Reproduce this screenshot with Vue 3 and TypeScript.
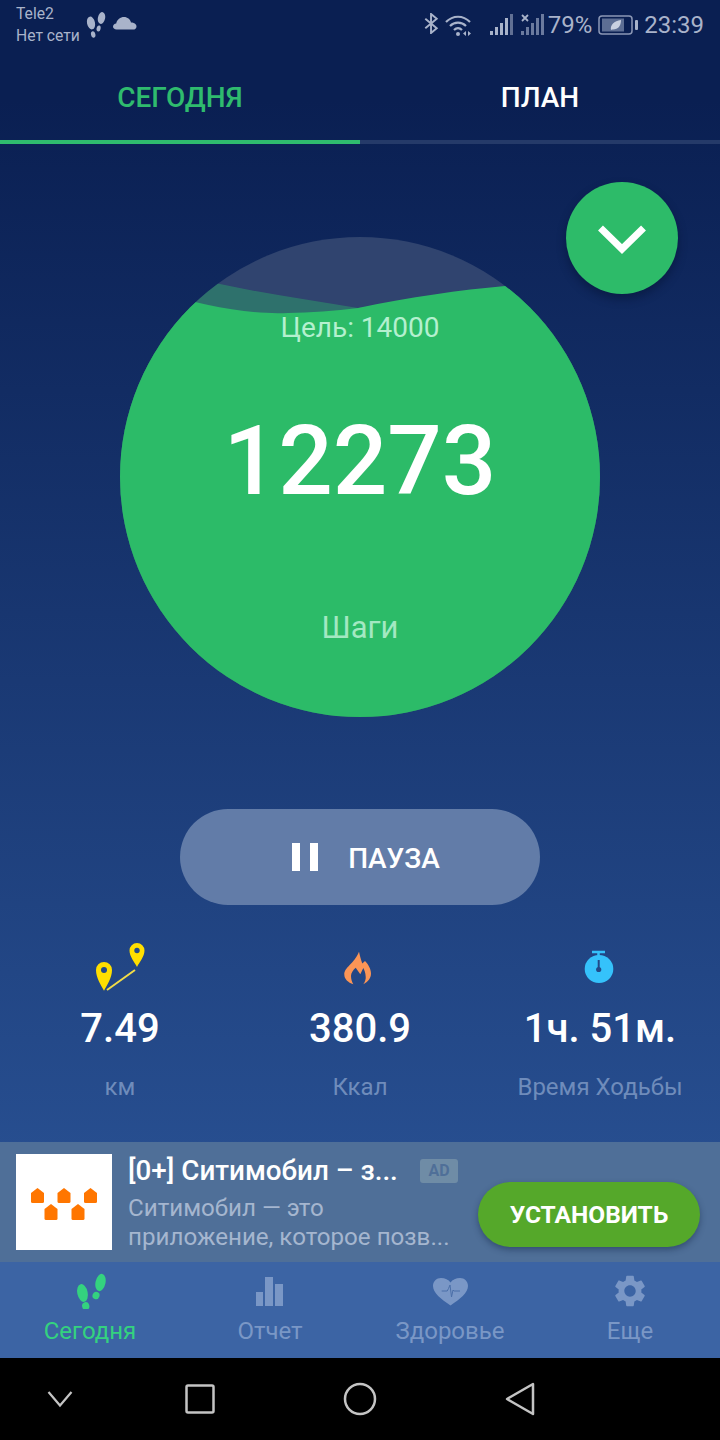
<template>
  <div class="page">
    <!-- status bar -->
    <header class="status">
      <div class="carrier">
        <span>Tele2</span>
        <span>Нет сети</span>
      </div>
      <svg class="st-steps" width="22" height="27" viewBox="0 0 22 27" fill="#a9b3ca">
        <ellipse cx="6" cy="11" rx="4" ry="6.5" transform="rotate(-12 6 11)" />
        <ellipse cx="8.2" cy="22.5" rx="2.2" ry="3.2" transform="rotate(-12 8.2 22.5)" />
        <ellipse cx="16.5" cy="6" rx="3.6" ry="6" transform="rotate(12 16.5 6)" />
        <ellipse cx="13.6" cy="16.5" rx="2" ry="3" transform="rotate(12 13.6 16.5)" />
      </svg>
      <svg class="st-cloud" width="24" height="16" viewBox="0 0 24 16" fill="#a9b3ca">
        <path d="M3.5 15.5C1.4 15.5 0 14.2 0 12.6c0-1.7 1.4-3 3.2-3.1C4 5.600 7.400 3 11 3c3.500 0 6.200 2.300 7 5.400 3 .1 5.500 1.500 5.500 4 0 1.900-1.500 3.100-3.500 3.100z" />
      </svg>
      <div class="status-right">
        <svg class="st-bt" width="15" height="21" viewBox="0 0 15 22" fill="none" stroke="#a9b3ca" stroke-width="2">
          <path d="M1 6l12 10-6 5V1l6 5L1 16" />
        </svg>
        <svg class="st-wifi" width="28" height="23" viewBox="0 0 28 23" fill="none" stroke="#a9b3ca" stroke-width="2.200">
          <path d="M1 8c7-7 17-7 24 0M5 12c4.500-4.500 11.500-4.500 16 0M9 16c2.500-2.500 5.500-2.500 8 0" />
          <circle cx="13" cy="20" r="2" fill="#a9b3ca" stroke="none" />
          <path d="M21 17l-3 2.500 3 2.500zM23 17l3 2.500-3 2.500z" fill="#a9b3ca" stroke="none" />
        </svg>
        <svg class="st-sig" width="24" height="22" viewBox="0 0 24 22" fill="#a9b3ca">
          <rect x="0" y="17" width="3" height="4" />
          <rect x="5" y="13" width="3" height="8" />
          <rect x="10" y="9" width="3" height="12" />
          <rect x="15" y="4" width="3" height="17" />
          <rect x="20" y="0" width="3" height="21" opacity=".55" />
        </svg>
        <svg class="st-sig2" width="24" height="22" viewBox="0 0 24 22" fill="#6b7a9e">
          <rect x="0" y="17" width="3" height="4" />
          <rect x="5" y="13" width="3" height="8" />
          <rect x="10" y="9" width="3" height="12" />
          <rect x="15" y="4" width="3" height="17" />
          <rect x="20" y="0" width="3" height="21" />
          <path d="M1 1l6 6M7 1L1 7" stroke="#a9b3ca" stroke-width="1.800" />
        </svg>
        <span class="pct">79%</span>
        <svg class="st-batt" width="41" height="20" viewBox="0 0 41 20">
          <rect x="1" y="1" width="33" height="18" rx="3" fill="none" stroke="#8c98b6" stroke-width="1.500" />
          <rect x="4" y="3.500" width="22" height="13" fill="#5d6e94" />
          <rect x="37" y="5" width="3" height="10" rx="1" fill="#a9b3ca" />
          <path d="M13 15c-1-5 3-9 10-10 0 6-3 10-9 9.500z" fill="#c9d0e0" />
        </svg>
        <span class="clock">23:39</span>
      </div>
    </header>

    <!-- tabs -->
    <nav class="tabs">
      <div class="tab active">СЕГОДНЯ</div>
      <div class="tab">ПЛАН</div>
    </nav>

    <main class="main">
      <button class="fab">
        <svg width="48" height="32" viewBox="0 0 48 32" fill="none" stroke="#fff" stroke-width="7">
          <path d="M2.500 6L24 27L45.500 6" />
        </svg>
      </button>

      <div class="ball">
        <svg class="waves" width="480" height="480" viewBox="0 0 480 480">
          <path d="M40 32C100 50 170 60 238 71L480 40V480H0V32z" fill="#2cbb68" opacity=".38" />
          <path d="M40 55C80 68 130 78 168 76C190 75.500 215 74 238 71C290 60 340 53 385 49C420 46 450 44 480 42V480H0V55z" fill="#2cbb68" />
        </svg>
        <div class="goal">Цель: 14000</div>
        <div class="count">12273</div>
        <div class="unit">Шаги</div>
      </div>

      <button class="pause">
        <span class="bars"><i></i><i></i></span>
        <span class="pause-text">ПАУЗА</span>
      </button>

      <section class="stats">
        <div class="stat">
          <svg class="stat-icon" width="52" height="52" viewBox="0 0 52 52">
            <path d="M10 50.700C7 45 2 38 2 30a8 8 0 0 1 16 0C18 38 13 45 10 50.700z" fill="#ffdf00" />
            <circle cx="10" cy="30" r="3" fill="#234a88" />
            <path d="M43 27C40.500 22 35.500 16.500 35.500 10.500a7.500 7.500 0 0 1 15 0C50.500 16.500 45.500 22 43 27z" fill="#ffdf00" />
            <circle cx="43" cy="10.500" r="2.700" fill="#234a88" />
            <path d="M13 50L41 30" stroke="#f2dc47" stroke-width="2" />
          </svg>
          <div class="value">7.49</div>
          <div class="label">км</div>
        </div>
        <div class="stat">
          <svg class="stat-icon" width="52" height="52" viewBox="0 0 52 52">
            <path d="M25 11.700C26 16 27 20 28.300 23.500L31 21C34 24 37 29 37 33.500C37 38 34 42 29.300 44.300C31 42 32 39 31.700 36.700C31.500 33 30.500 30 29.300 28L26.300 34.300L21.700 27.700C19 30 17 33 17 36C17 39 18 42 19.300 44.300C14 42.500 10.300 39 10.300 34.500C10.300 27 20 24 25 11.700z" fill="#fb9556" />
          </svg>
          <div class="value">380.9</div>
          <div class="label">Ккал</div>
        </div>
        <div class="stat">
          <svg class="stat-icon" width="52" height="52" viewBox="0 0 52 52">
            <path d="M18 12h13M24.500 12v5" stroke="#35c2fb" stroke-width="2.500" />
            <ellipse cx="25" cy="29" rx="14.300" ry="14" fill="#35c2fb" />
            <path d="M24.700 20v9" stroke="#234a88" stroke-width="2" />
            <circle cx="24.700" cy="29.500" r="2.600" fill="#234a88" />
          </svg>
          <div class="value">1ч. 51м.</div>
          <div class="label">Время Ходьбы</div>
        </div>
      </section>
    </main>

    <!-- ad -->
    <section class="ad">
      <div class="ad-logo">
        <svg width="70" height="46" viewBox="0 0 70 46" fill="#ff7600">
          <path d="M2 14l6.500-5 6.500 5v8.500a1.500 1.500 0 0 1-1.500 1.500h-10a1.500 1.500 0 0 1-1.500-1.500z" />
          <path d="M28.500 14l6.500-5 6.500 5v8.500a1.500 1.500 0 0 1-1.500 1.500H30a1.500 1.500 0 0 1-1.500-1.500z" />
          <path d="M55 14l6.500-5 6.500 5v8.500a1.500 1.500 0 0 1-1.500 1.500h-10a1.500 1.500 0 0 1-1.500-1.500z" />
          <path d="M15.500 30l6.500-5 6.500 5v9.500a1.500 1.500 0 0 1-1.500 1.500H17a1.500 1.500 0 0 1-1.500-1.500z" />
          <path d="M42.500 30l6.500-5 6.500 5v9.500a1.500 1.500 0 0 1-1.500 1.500H44a1.500 1.500 0 0 1-1.500-1.500z" />
        </svg>
      </div>
      <div class="ad-text">
        <div class="ad-head">
          <span class="ad-title">[0+] Ситимобил – з...</span>
          <span class="ad-badge">AD</span>
        </div>
        <div class="ad-desc">Ситимобил — это<br />приложение, которое позв...</div>
      </div>
      <button class="install">УСТАНОВИТЬ</button>
    </section>

    <!-- bottom nav -->
    <nav class="bottom">
      <div class="item on">
        <svg width="34" height="36" viewBox="0 0 34 36" fill="currentColor">
          <ellipse cx="9.500" cy="20" rx="5.200" ry="9" transform="rotate(-12 9.500 20)" />
          <ellipse cx="12.700" cy="33" rx="3.600" ry="4" transform="rotate(-15 12.700 33)" />
          <ellipse cx="27.500" cy="9.500" rx="5" ry="8.800" transform="rotate(12 27.500 9.500)" />
          <ellipse cx="23" cy="22.500" rx="3.500" ry="3.800" transform="rotate(20 23 22.500)" />
        </svg>
        <span>Сегодня</span>
      </div>
      <div class="item">
        <svg width="34" height="36" viewBox="0 0 34 36" fill="currentColor">
          <rect x="3" y="19" width="7" height="14" />
          <rect x="12" y="4" width="8" height="29" />
          <rect x="22" y="11" width="8" height="22" />
        </svg>
        <span>Отчет</span>
      </div>
      <div class="item">
        <svg width="36" height="36" viewBox="0 0 36 36" overflow="visible">
          <path d="M18.500 32.500C9 26 1 20 1 13C1 8.500 4.500 5 9 5C13 5 16.500 6.500 18.500 9.500C20.500 6.500 24 5 28 5C32.500 5 36 8.500 36 13C36 20 28 26 18.500 32.500z" fill="currentColor" />
          <path d="M9.700 18h5.500l1.300-2.500 1.500-3.500 1.500 12 1.500-7 1 1h6" fill="none" stroke="#4b6fa8" stroke-width="1" />
        </svg>
        <span>Здоровье</span>
      </div>
      <div class="item">
        <svg class="gear" width="38" height="38" viewBox="0 0 24 24" fill="currentColor">
          <path d="M19.140 12.940c.04-.3.060-.61.060-.94 0-.32-.02-.64-.07-.94l2.030-1.580a.49.49 0 0 0 .12-.61l-1.920-3.320a.49.49 0 0 0-.59-.22l-2.390.96a7 7 0 0 0-1.620-.94l-.36-2.540a.48.48 0 0 0-.48-.41h-3.840a.48.48 0 0 0-.47.41l-.36 2.540c-.59.24-1.130.57-1.620.94l-2.390-.96a.48.48 0 0 0-.59.22L2.740 8.870a.47.47 0 0 0 .12.61l2.030 1.580c-.05.3-.09.63-.09.94s.02.64.07.94l-2.030 1.580a.49.49 0 0 0-.12.61l1.920 3.320c.12.22.37.29.59.22l2.390-.96c.5.380 1.030.7 1.620.94l.36 2.540c.05.24.24.41.48.41h3.840c.24 0 .44-.17.47-.41l.36-2.540c.59-.24 1.130-.56 1.620-.94l2.390.96c.22.08.47 0 .59-.22l1.920-3.320a.47.47 0 0 0-.12-.61zM12 15.600A3.610 3.610 0 0 1 8.400 12c0-1.980 1.620-3.600 3.600-3.600s3.600 1.620 3.600 3.600-1.620 3.600-3.600 3.600z" />
        </svg>
        <span>Еще</span>
      </div>
    </nav>

    <!-- system nav -->
    <footer class="sys">
      <svg width="26" height="18" viewBox="0 0 26 18" fill="none" stroke="#c4c4c4" stroke-width="2.200">
        <path d="M1.500 2L13 15.500L24.500 2" />
      </svg>
      <svg width="30" height="30" viewBox="0 0 30 30" fill="none" stroke="#c4c4c4" stroke-width="2.500">
        <rect x="1.500" y="1.500" width="27" height="27" rx="1.500" />
      </svg>
      <svg width="34" height="34" viewBox="0 0 34 34" fill="none" stroke="#c4c4c4" stroke-width="2.500">
        <circle cx="17" cy="17" r="15" />
      </svg>
      <svg width="30" height="34" viewBox="0 0 30 34" fill="none" stroke="#c4c4c4" stroke-width="2.500" stroke-linejoin="round">
        <path d="M2 17L28 2V32z" />
      </svg>
    </footer>
  </div>
</template>

<script setup lang="ts">
</script>

<style>
body {
  margin: 0;
  background: #000;
}
</style>

<style scoped>
.page {
  width: 720px;
  height: 1440px;
  display: flex;
  flex-direction: column;
  overflow: hidden;
  font-family: Roboto, "Noto Sans", sans-serif;
  background: linear-gradient(#0a1f52 0, #0a1f52 100px, #2a5396 1262px);
}

.status {
  height: 56px;
  display: flex;
  align-items: flex-start;
  padding: 0 16px;
  box-sizing: border-box;
  color: #a9b3ca;
}

.carrier {
  display: flex;
  flex-direction: column;
  font-size: 15.700px;
  line-height: 22px;
  padding-top: 3px;
  width: 69px;
}

.st-steps {
  margin-top: 12px;
}

.st-cloud {
  margin: 14px 0 0 6px;
}

.status-right {
  margin-left: auto;
  display: flex;
  align-items: center;
  height: 50px;
}

.st-bt {
  margin-top: -3px;
}

.st-wifi {
  margin-left: 6px;
}

.st-sig {
  margin-left: 17px;
}

.st-sig2 {
  margin-left: 7px;
}

.pct {
  font-size: 24px;
  margin-left: 3px;
}

.st-batt {
  margin-left: 6px;
}

.clock {
  font-size: 24px;
  margin-left: 5px;
}

.tabs {
  height: 88px;
  display: flex;
}

.tab {
  flex: 1;
  display: flex;
  align-items: center;
  justify-content: center;
  font-size: 28px;
  font-weight: 500;
  color: #fff;
  box-sizing: border-box;
  padding-bottom: 2px;
  border-bottom: 4px solid #253a69;
}

.tab.active {
  color: #2fbb6e;
  border-bottom-color: #2fbb6e;
}

.main {
  position: relative;
  flex: 1;
  display: flex;
  flex-direction: column;
  align-items: center;
  padding-top: 93px;
  box-sizing: border-box;
}

.fab {
  position: absolute;
  top: 38px;
  left: 566px;
  width: 112px;
  height: 112px;
  padding: 0;
  border: 0;
  border-radius: 50%;
  background: #2dbb69;
  box-shadow: 0 5px 10px rgba(5, 15, 45, .45);
  display: flex;
  align-items: center;
  justify-content: center;
}

.ball {
  position: relative;
  width: 480px;
  height: 480px;
  border-radius: 50%;
  overflow: hidden;
  background: #30446f;
  display: flex;
  flex-direction: column;
  align-items: center;
}

.waves {
  position: absolute;
  top: 0;
  left: 0;
}

.goal,
.count,
.unit {
  position: relative;
  color: #fff;
}

.goal {
  margin-top: 73px;
  font-size: 28px;
  line-height: 36px;
  color: #b4f0cf;
}

.count {
  margin-top: 65px;
  font-size: 96px;
  font-weight: 500;
  line-height: 100px;
}

.unit {
  margin-top: 97px;
  font-size: 31px;
  line-height: 40px;
  color: #a3e8c2;
}

.pause {
  margin-top: 92px;
  width: 360px;
  height: 96px;
  border: 0;
  padding: 0 0 0 12px;
  border-radius: 48px;
  background: #627ca8;
  color: #fff;
  font-family: inherit;
  font-size: 28px;
  font-weight: 500;
  display: flex;
  align-items: center;
  justify-content: center;
  gap: 30px;
}

.pause-text {
  padding-top: 2px;
}

.bars {
  display: flex;
  gap: 10px;
}

.bars i {
  display: block;
  width: 8px;
  height: 28px;
  background: #fff;
}

.stats {
  margin-top: 35px;
  width: 100%;
  display: grid;
  grid-template-columns: repeat(3, 1fr);
}

.stat {
  display: flex;
  flex-direction: column;
  align-items: center;
}

.stat-icon {
  display: block;
}

.value {
  margin-top: 13px;
  font-size: 40px;
  line-height: 48px;
  font-weight: 500;
  color: #fff;
}

.label {
  margin-top: 19px;
  font-size: 24px;
  line-height: 30px;
  color: #6f8cbb;
}

.ad {
  height: 120px;
  background: #4f6f98;
  display: flex;
  align-items: center;
  padding: 0 20px 0 16px;
  box-sizing: border-box;
}

.ad-logo {
  width: 96px;
  height: 96px;
  background: #fff;
  display: flex;
  align-items: center;
  justify-content: center;
}

.ad-text {
  margin-left: 16px;
  width: 334px;
}

.ad-head {
  display: flex;
  align-items: center;
  height: 36px;
}

.ad-title {
  font-size: 27.800px;
  font-weight: 500;
  color: #fff;
  width: 292px;
  white-space: nowrap;
}

.ad-badge {
  width: 38px;
  height: 24px;
  border-radius: 3px;
  background: #6f8ca6;
  color: #4f6f98;
  font-size: 16px;
  font-weight: 700;
  line-height: 24px;
  text-align: center;
}

.ad-desc {
  font-size: 24.150px;
  line-height: 29px;
  margin-top: 5px;
  color: #a5b6cf;
  white-space: nowrap;
}

.install {
  margin-left: auto;
  margin-top: 25px;
  width: 222px;
  height: 65px;
  border: 0;
  padding: 0;
  border-radius: 33px;
  background: #55a82a;
  color: #fff;
  font-family: inherit;
  font-size: 24.500px;
  font-weight: 700;
  box-shadow: 0 3px 6px rgba(20, 40, 70, .45);
}

.bottom {
  height: 96px;
  background: #3c64a4;
  display: grid;
  grid-template-columns: repeat(4, 1fr);
}

.item {
  display: flex;
  flex-direction: column;
  align-items: center;
  padding-top: 11px;
  color: #7a97c6;
  font-size: 24px;
  line-height: 30px;
}

.item svg {
  display: block;
  margin-bottom: 7px;
}

.item svg.gear {
  margin: -1px 0 6px;
}

.item.on {
  color: #34d27f;
}

.sys {
  height: 82px;
  background: #000;
  display: grid;
  grid-template-columns: 120px 160px 160px 160px;
  justify-items: center;
  align-items: center;
}
</style>
